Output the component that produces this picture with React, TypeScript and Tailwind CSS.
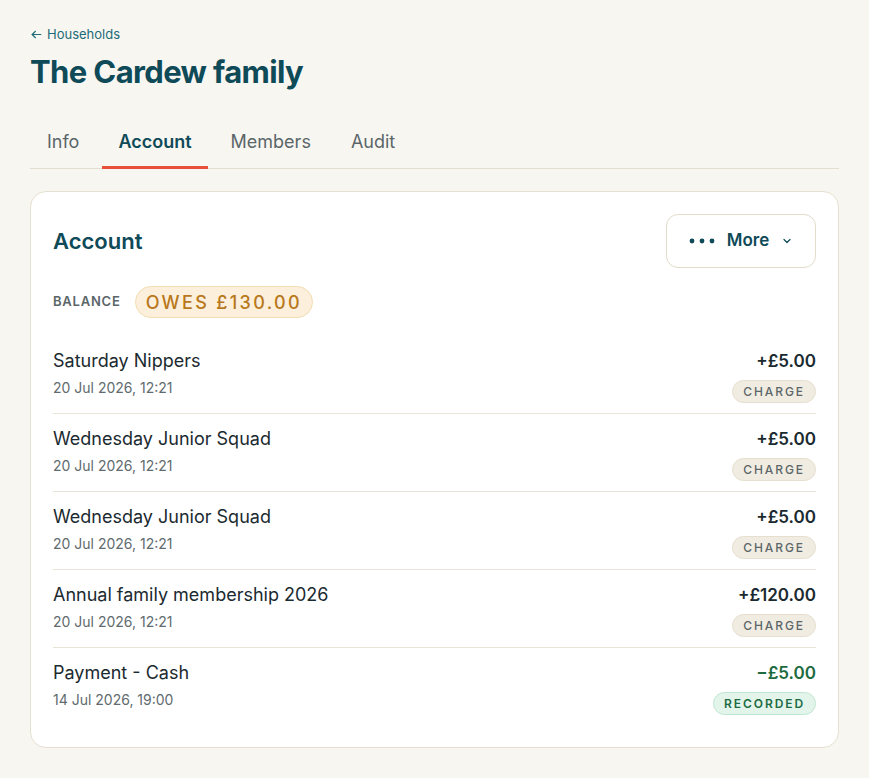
import React from "react";

type Row = { title: string; date: string; amount: string; kind: "charge" | "recorded" };

const rows: Row[] = [
  { title: "Saturday Nippers", date: "20 Jul 2026, 12:21", amount: "+£5.00", kind: "charge" },
  { title: "Wednesday Junior Squad", date: "20 Jul 2026, 12:21", amount: "+£5.00", kind: "charge" },
  { title: "Wednesday Junior Squad", date: "20 Jul 2026, 12:21", amount: "+£5.00", kind: "charge" },
  { title: "Annual family membership 2026", date: "20 Jul 2026, 12:21", amount: "+£120.00", kind: "charge" },
  { title: "Payment - Cash", date: "14 Jul 2026, 19:00", amount: "−£5.00", kind: "recorded" },
];

export default function App() {
  return (
    <div className="min-h-screen bg-[#f8f6f1] px-[30px] pt-[25px] pb-[30px] font-['Inter',sans-serif] text-[#1b2a30]">
      <a className="flex items-center gap-[4px] text-[13px] leading-[18px] text-[#1d6b78]">
        <svg width="13" height="13" viewBox="0 0 24 24" fill="none" stroke="currentColor" strokeWidth="2" strokeLinecap="round" strokeLinejoin="round">
          <path d="M20 12H4" />
          <path d="M10 6l-6 6 6 6" />
        </svg>
        <span>Households</span>
      </a>
      <h1 className="mt-[11px] text-[31px] leading-[36px] font-bold tracking-[-0.02em] text-[#0e4a58]">The Cardew family</h1>

      <div className="mt-[36px] flex gap-[6px] border-b border-[#e4ded1]">
        {["Info", "Account", "Members", "Audit"].map((t) => (
          <div
            key={t}
            className={
              t === "Account"
                ? "border-b-[3px] border-[#e8503c] px-[16px] pt-[2px] pb-[10px] text-[18px] leading-[28px] font-semibold text-[#0e4a58] -mb-px"
                : "border-b-[3px] border-transparent px-[17px] pt-[2px] pb-[10px] text-[18px] leading-[28px] text-[#5b6669] -mb-px"
            }
          >
            {t}
          </div>
        ))}
      </div>

      <div className="mt-[22px] rounded-[16px] border border-[#e6e0d0] bg-white px-[22px] pt-[22px] pb-[21px]">
        <div className="flex items-center justify-between">
          <h2 className="text-[22px] leading-[28px] font-semibold text-[#0e4a58]">Account</h2>
          <button className="flex h-[54px] w-[150px] items-center justify-center gap-[12px] rounded-[12px] border border-[#e2dccb] bg-white text-[17px] font-semibold text-[#0e4a58]">
            <svg width="26" height="6" viewBox="0 0 26 6" fill="currentColor">
              <circle cx="3" cy="3" r="2.4" />
              <circle cx="13" cy="3" r="2.4" />
              <circle cx="23" cy="3" r="2.4" />
            </svg>
            <span>More</span>
            <svg width="12" height="12" viewBox="0 0 24 24" fill="none" stroke="currentColor" strokeWidth="2.4" strokeLinecap="round" strokeLinejoin="round">
              <path d="M6 9l6 6 6-6" />
            </svg>
          </button>
        </div>

        <div className="mt-[18px] flex items-center gap-[14px]">
          <span className="text-[13px] font-semibold tracking-[0.06em] text-[#5b6669]">BALANCE</span>
          <span className="flex h-[32px] items-center rounded-full border border-[#f2ddb3] bg-[#fcefdb] px-[10px] text-[18px] font-medium tracking-[0.13em] text-[#b8781c]">
            OWES £130.00
          </span>
        </div>

        <div className="mt-[18px]">
          {rows.map((r, i) => (
            <div
              key={i}
              className={
                "flex items-start justify-between pt-[13px] " +
                (i < rows.length - 1 ? "border-b border-[#e9e4d8] pb-[10px]" : "pb-[11px]")
              }
            >
              <div>
                <div className="text-[18px] leading-[24px] font-normal text-[#1b2a30]">{r.title}</div>
                <div className="mt-[5px] text-[14px] leading-[20px] text-[#5f6b6e]">{r.date}</div>
              </div>
              <div className="flex flex-col items-end">
                <div
                  className={
                    "text-[17px] leading-[24px] font-semibold " +
                    (r.kind === "recorded" ? "text-[#1d6b3f]" : "text-[#1b2a30]")
                  }
                >
                  {r.amount}
                </div>
                {r.kind === "charge" ? (
                  <span className="mt-[7px] flex h-[23px] items-center rounded-full border border-[#e6dfcf] bg-[#f1ece1] px-[10px] text-[12px] font-medium tracking-[0.16em] text-[#5b6669]">
                    CHARGE
                  </span>
                ) : (
                  <span className="mt-[7px] flex h-[23px] items-center rounded-full border border-[#bfe6d0] bg-[#e3f5eb] px-[10px] text-[12px] font-semibold tracking-[0.16em] text-[#1c6b43]">
                    RECORDED
                  </span>
                )}
              </div>
            </div>
          ))}
        </div>
      </div>
    </div>
  );
}
